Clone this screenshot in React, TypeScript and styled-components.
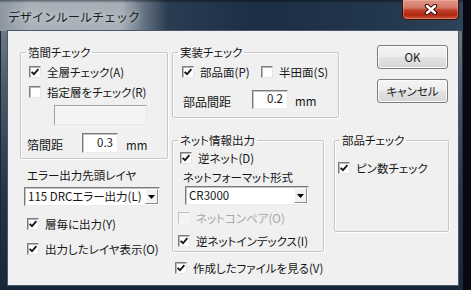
import React from 'react';
import styled, { createGlobalStyle } from 'styled-components';

const GlobalStyle = createGlobalStyle`
    html, body {
        margin: 0;
        padding: 0;
        background: #06090d;
    }
    body {
        width: 471px;
        height: 290px;
        overflow: hidden;
        font-family: 'Noto Sans CJK JP', 'Noto Sans', sans-serif;
        font-size: 11.5px;
        line-height: 14px;
        color: #161616;
        font-feature-settings: 'palt';
    }
`;

type CheckProps = {
    label: string;
    indent: number;
    mt?: number;
    checked?: boolean;
    disabled?: boolean;
    width?: number;
};

const Check = ({label, indent, mt = 0, checked, disabled, width}: CheckProps) => (
    <CheckRow $indent={indent} $mt={mt} $w={width}>
        <CheckBox $disabled={disabled}>
            {checked &&
                <svg width="10" height="10" viewBox="0 0 10 10">
                    <path d="M1.6 4.8 L4 7.2 L8.4 2.2" fill="none" stroke="#151515" strokeWidth="1.8" />
                </svg>}
        </CheckBox>
        <CheckText $disabled={disabled}>{label}</CheckText>
    </CheckRow>
);

const Combo = ({text, indent, mt, w}: {text: string; indent: number; mt: number; w: number}) => (
    <ComboBox $indent={indent} $mt={mt} $w={w}>
        <ComboText>{text}</ComboText>
        <ComboArrow>
            <svg width="7" height="4" viewBox="0 0 7 4">
                <polygon points="0,0 7,0 3.5,4" fill="#000" />
            </svg>
        </ComboArrow>
    </ComboBox>
);

const App = () => {
    return (
        <>
            <GlobalStyle />
            <Window>
                <TitleBar>
                    <Title>デザインルールチェック</Title>
                    <CloseButton>
                        <svg width="14" height="11" viewBox="0 0 14 11">
                            <path d="M3 2 L11 9 M11 2 L3 9" stroke="#3d0c08" strokeWidth="4.4" strokeLinecap="round" />
                            <path d="M3 2 L11 9 M11 2 L3 9" stroke="#fff" strokeWidth="2.4" strokeLinecap="round" />
                        </svg>
                    </CloseButton>
                </TitleBar>
                <FrameBody>
                    <Client>
                        <LeftCol>
                            <Group $w={148} $h={114}>
                                <Legend>箔間チェック</Legend>
                                <GroupBody $pt={5}>
                                    <Check indent={8} checked label="全層チェック(A)" />
                                    <Check indent={8} mt={4} label="指定層をチェック(R)" />
                                    <DisabledEdit />
                                    <DistanceRow $indent={6} $mt={8}>
                                        <DistLabel $w={55}>箔間距</DistLabel>
                                        <NumInput $h={20}>0.3</NumInput>
                                        <Unit $gap={8}>mm</Unit>
                                    </DistanceRow>
                                </GroupBody>
                            </Group>
                            <FieldLabel $indent={7} $mt={9}>エラー出力先頭レイヤ</FieldLabel>
                            <Combo indent={4} mt={5} w={136} text="115 DRCエラー出力(L)" />
                            <Check indent={7} mt={10} checked label="層毎に出力(Y)" />
                            <Check indent={7} mt={9} width={132} checked label="出力したレイヤ表示(O)" />
                        </LeftCol>
                        <RightArea>
                            <TopRow>
                                <Group $w={167} $h={73}>
                                    <Legend>実装チェック</Legend>
                                    <GroupBody $pt={5}>
                                        <InlineChecks>
                                            <Check indent={9} width={79} checked label="部品面(P)" />
                                            <Check indent={0} label="半田面(S)" />
                                        </InlineChecks>
                                        <DistanceRow $indent={10} $mt={10}>
                                            <DistLabel $w={69}>部品間距</DistLabel>
                                            <NumInput $h={19}>0.2</NumInput>
                                            <Unit $gap={7}>mm</Unit>
                                        </DistanceRow>
                                    </GroupBody>
                                </Group>
                                <ButtonCol>
                                    <PushButton>OK</PushButton>
                                    <PushButton>キャンセル</PushButton>
                                </ButtonCol>
                            </TopRow>
                            <MidRow>
                                <Group $w={152} $h={119}>
                                    <Legend>ネット情報出力</Legend>
                                    <GroupBody $pt={3}>
                                        <Check indent={7} checked label="逆ネット(D)" />
                                        <FieldLabel $indent={10} $mt={4}>ネットフォーマット形式</FieldLabel>
                                        <Combo indent={12} mt={2} w={124} text="CR3000" />
                                        <Check indent={5} mt={5} disabled label="ネットコンペア(O)" />
                                        <Check indent={5} mt={7} checked label="逆ネットインデックス(I)" />
                                    </GroupBody>
                                </Group>
                                <Group $w={115} $h={99} $ml={10}>
                                    <Legend>部品チェック</Legend>
                                    <GroupBody $pt={13}>
                                        <Check indent={3} checked label="ピン数チェック" />
                                    </GroupBody>
                                </Group>
                            </MidRow>
                            <Check indent={3} mt={8} checked label="作成したファイルを見る(V)" />
                        </RightArea>
                    </Client>
                </FrameBody>
            </Window>
        </>
    );
}


// styled-components
const Window = styled.div`
    width: 463px;
    height: 290px;
    display: flex;
    flex-direction: column;
    background: linear-gradient(180deg, #7d8995 0%, #4b5b6c 30%, #24364a 65%, #17263a 100%);
    box-shadow: inset 1px 1px 0 #20262d, inset -1px 0 0 #202830;
`;

const TitleBar = styled.div`
    height: 31px;
    display: flex;
    align-items: flex-start;
    background:
        linear-gradient(180deg, rgba(0,0,0,0.45) 0px, rgba(0,0,0,0) 3px),
        linear-gradient(90deg, #8b96a1 0px, #a9b2ba 30px, #a6afb7 122px, #61707f 145px, #2a3c51 168px, #1c2e44 260px, #22364d 380px, #2e4259 463px);
`;

const Title = styled.div`
    padding: 9px 0 0 8px;
    font-size: 12px;
    line-height: 16px;
    font-feature-settings: normal;
    color: #1b1b1b;
    text-shadow: 0 0 6px rgba(255,255,255,0.8);
`;

const CloseButton = styled.div`
    margin: 0 4px 0 auto;
    width: 57px;
    height: 20px;
    box-sizing: border-box;
    display: flex;
    align-items: center;
    justify-content: center;
    border: 1px solid #3c0f08;
    border-top: none;
    border-radius: 0 0 5px 5px;
    background: linear-gradient(180deg, #e0988a 0%, #d27563 42%, #c1432f 52%, #b0260f 78%, #cd5639 100%);
    box-shadow: inset 0 0 0 1px rgba(255,200,190,0.35);
`;

const FrameBody = styled.div`
    flex: 1;
    display: flex;
    padding: 0 5px 5px 8px;
`;

const Client = styled.div`
    flex: 1;
    display: flex;
    gap: 4px;
    padding: 14px 0 0 12px;
    background: #f0f0f0;
    box-shadow: 0 0 0 1px #4a5867;
`;

const LeftCol = styled.div`
    width: 148px;
    display: flex;
    flex-direction: column;
`;

const RightArea = styled.div`
    display: flex;
    flex-direction: column;
`;

const TopRow = styled.div`
    display: flex;
    align-items: flex-start;
`;

const MidRow = styled.div`
    display: flex;
    align-items: flex-start;
    margin-top: 15px;
`;

const ButtonCol = styled.div`
    display: flex;
    flex-direction: column;
    gap: 10px;
    margin-left: 38px;
`;

const Group = styled.fieldset<{ $w: number; $h: number; $ml?: number }>`
    box-sizing: border-box;
    width: ${p => p.$w}px;
    height: ${p => p.$h}px;
    margin: 0 0 0 ${p => p.$ml || 0}px;
    padding: 0;
    min-width: 0;
    border: 1px solid #c6c6c6;
    border-radius: 2px;
    box-shadow: 1px 1px 0 #fff, inset 1px 1px 0 #fff;
`;

const Legend = styled.legend`
    margin-left: 5px;
    padding: 0 2px;
    height: 14px;
    line-height: 14px;
`;

const GroupBody = styled.div<{ $pt: number }>`
    display: flex;
    flex-direction: column;
    padding-top: ${p => p.$pt}px;
`;

const CheckRow = styled.div<{ $indent: number; $mt: number; $w?: number }>`
    display: flex;
    align-items: center;
    gap: 6px;
    height: 16px;
    margin: ${p => p.$mt}px 0 0 ${p => p.$indent}px;
    width: ${p => (p.$w ? `${p.$w}px` : 'auto')};
    flex-shrink: 0;
    overflow: hidden;
    white-space: nowrap;
`;

const CheckBox = styled.span<{ $disabled?: boolean }>`
    box-sizing: border-box;
    width: 12px;
    height: 12px;
    flex-shrink: 0;
    display: flex;
    align-items: center;
    justify-content: center;
    background: ${p => (p.$disabled ? '#f3f3f3' : '#fff')};
    border: 1px solid;
    border-color: ${p => (p.$disabled ? '#c4c4c4 #f6f6f6 #f6f6f6 #c4c4c4' : '#7c7c7c #e6e6e6 #e6e6e6 #7c7c7c')};
    box-shadow: ${p => (p.$disabled ? 'none' : 'inset 1px 1px 0 #b8b8b8')};
`;

const CheckText = styled.span<{ $disabled?: boolean }>`
    color: ${p => (p.$disabled ? '#a7a7a7' : 'inherit')};
`;

const InlineChecks = styled.div`
    display: flex;
`;

const DisabledEdit = styled.div`
    box-sizing: border-box;
    width: 93px;
    height: 20px;
    margin: 5px 0 0 33px;
    background: #f4f4f4;
    border: 1px solid;
    border-color: #a3a3a3 #e8e8e8 #e8e8e8 #a3a3a3;
`;

const DistanceRow = styled.div<{ $indent: number; $mt: number }>`
    display: flex;
    align-items: center;
    margin: ${p => p.$mt}px 0 0 ${p => p.$indent}px;
`;

const DistLabel = styled.span<{ $w: number }>`
    width: ${p => p.$w}px;
    padding-top: 4px;
    font-size: 12px;
`;

const NumInput = styled.div<{ $h: number }>`
    box-sizing: border-box;
    width: 36px;
    height: ${p => p.$h}px;
    padding: 0 4px 0 0;
    text-align: right;
    line-height: ${p => p.$h - 4}px;
    background: #fff;
    border: 1px solid;
    border-color: #7a7a7a #ececec #ececec #7a7a7a;
    box-shadow: inset 1px 1px 0 #c4c4c4;
`;

const Unit = styled.span<{ $gap: number }>`
    margin-left: ${p => p.$gap}px;
    padding-top: 3px;
`;

const FieldLabel = styled.div<{ $indent: number; $mt: number }>`
    margin: ${p => p.$mt}px 0 0 ${p => p.$indent}px;
    white-space: nowrap;
`;

const ComboBox = styled.div<{ $indent: number; $mt: number; $w: number }>`
    box-sizing: border-box;
    display: flex;
    width: ${p => p.$w}px;
    height: 19px;
    margin: ${p => p.$mt}px 0 0 ${p => p.$indent}px;
    padding: 1px;
    background: #fff;
    border: 1px solid;
    border-color: #7a7a7a #ececec #ececec #7a7a7a;
    box-shadow: inset 1px 1px 0 #c4c4c4;
`;

const ComboText = styled.span`
    flex: 1;
    min-width: 0;
    overflow: hidden;
    white-space: nowrap;
    padding-left: 2px;
    line-height: 15px;
`;

const ComboArrow = styled.span`
    box-sizing: border-box;
    width: 13px;
    flex-shrink: 0;
    display: flex;
    align-items: center;
    justify-content: center;
    background: #f2f2f2;
    border: 1px solid;
    border-color: #ffffff #8a8a8a #8a8a8a #ffffff;
`;

const PushButton = styled.button`
    box-sizing: border-box;
    width: 71px;
    height: 24px;
    padding: 0;
    font: inherit;
    color: #1a1a1a;
    border: 1px solid #7c7c7c;
    border-radius: 3px;
    background: linear-gradient(180deg, #f4f4f4 0%, #ededed 48%, #e2e2e2 52%, #d6d6d6 100%);
    box-shadow: inset 0 0 0 1px #fbfbfb;
`;

export default App;
